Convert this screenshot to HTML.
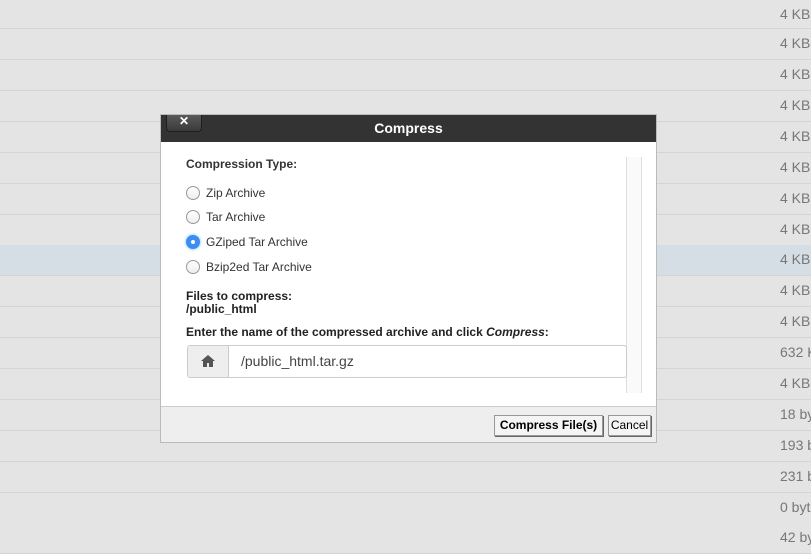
<!DOCTYPE html><html><head><style>
body{margin:0;width:811px;height:553px;overflow:hidden;background:#e4e4e4;font-family:"Liberation Sans",sans-serif;position:relative}
.r{position:absolute;left:0;width:811px;height:30px;border-bottom:1px solid #d4d4d4;background:#e4e4e4}
.r span{position:absolute;left:780px;top:6px;font-size:14px;color:#777;white-space:nowrap}
.dlg{position:absolute;left:160px;top:114px;width:497px;height:329px;background:#fff;border:1px solid #bbb;box-sizing:border-box}
.tb{height:27px;background:#333;color:#fff;font-weight:bold;font-size:14px;text-align:center;line-height:27px;position:relative}
.x{position:absolute;left:5px;top:0;width:34px;height:16px;background:linear-gradient(#5a5a5a,#3a3a3a);border:1px solid #1e1e1e;border-top:0;border-radius:0 0 4px 4px;line-height:13px;font-size:12px;color:#fff}
.lbl{position:absolute;font-size:12px;color:#333}
.rad{position:absolute;left:25px;width:12px;height:12px;border:1px solid #999;border-radius:50%;background:linear-gradient(#fff,#eee)}
.ft{position:absolute;left:0;right:0;bottom:0;height:35px;background:#eee;border-top:1px solid #ccc}
.btn{position:absolute;top:8px;height:19px;border:1px solid #999;background:#f4f4f4;font-size:12px;line-height:19px;text-align:center;box-shadow:1px 1px 0 #666}
</style></head><body>
<div class="r" style="top:0;height:28px"><span>4 KB</span></div>
<div class="r" style="top:29px"><span>4 KB</span></div>
<div class="r" style="top:60px"><span>4 KB</span></div>
<div class="r" style="top:91px"><span>4 KB</span></div>
<div class="r" style="top:122px"><span>4 KB</span></div>
<div class="r" style="top:153px"><span>4 KB</span></div>
<div class="r" style="top:184px"><span>4 KB</span></div>
<div class="r" style="top:215px"><span>4 KB</span></div>
<div class="r" style="top:245px;background:#d6dee5"><span>4 KB</span></div>
<div class="r" style="top:276px"><span>4 KB</span></div>
<div class="r" style="top:307px"><span>4 KB</span></div>
<div class="r" style="top:338px"><span>632 KB</span></div>
<div class="r" style="top:369px"><span>4 KB</span></div>
<div class="r" style="top:400px"><span>18 bytes</span></div>
<div class="r" style="top:431px"><span>193 bytes</span></div>
<div class="r" style="top:462px"><span>231 bytes</span></div>
<div class="r" style="top:493px"><span>0 bytes</span></div>
<div class="r" style="top:523px"><span>42 bytes</span></div>
<div class="dlg">
<div class="tb"><div class="x">✕</div>Compress</div>
<div style="position:absolute;left:465px;top:42px;width:14px;height:236px;border-left:1px solid #ddd;border-right:1px solid #ddd;background:#fafafa"></div>
<div class="lbl" style="left:25px;top:42px;font-weight:bold">Compression Type:</div>
<div class="rad" style="top:71px"></div><div class="lbl" style="left:45px;top:71px">Zip Archive</div>
<div class="rad" style="top:95px"></div><div class="lbl" style="left:45px;top:95px">Tar Archive</div>
<div class="rad" style="top:120px;background:#3b8ef0;border-color:#3b8ef0;box-shadow:0 0 3px #7ab5f5"><div style="width:4px;height:4px;background:#fff;border-radius:50%;margin:4px"></div></div><div class="lbl" style="left:45px;top:120px">GZiped Tar Archive</div>
<div class="rad" style="top:145px"></div><div class="lbl" style="left:45px;top:145px">Bzip2ed Tar Archive</div>
<div class="lbl" style="left:25px;top:175px;font-weight:bold;color:#222;line-height:13px">Files to compress:<br>/public_html</div>
<div class="lbl" style="left:25px;top:210px;font-weight:bold;color:#222">Enter the name of the compressed archive and click <i>Compress</i>:</div>
<div style="position:absolute;left:26px;top:230px;width:438px;height:31px;border:1px solid #ccc;border-radius:3px;overflow:hidden">
<div style="position:absolute;left:0;top:0;width:40px;height:31px;background:#eee;border-right:1px solid #ccc"><svg width="14" height="12" viewBox="0 0 14 12" style="position:absolute;left:13px;top:9px"><path d="M7 0L0 6h2v6h4V8h2v4h4V6h2z" fill="#555"/></svg></div>
<div style="position:absolute;left:53px;top:7px;font-size:14px;color:#444">/public_html.tar.gz</div></div>
<div class="ft"><div class="btn" style="left:333px;width:107px;font-weight:bold">Compress File(s)</div><div class="btn" style="left:447px;width:41px">Cancel</div></div>
</div>
</body></html>
